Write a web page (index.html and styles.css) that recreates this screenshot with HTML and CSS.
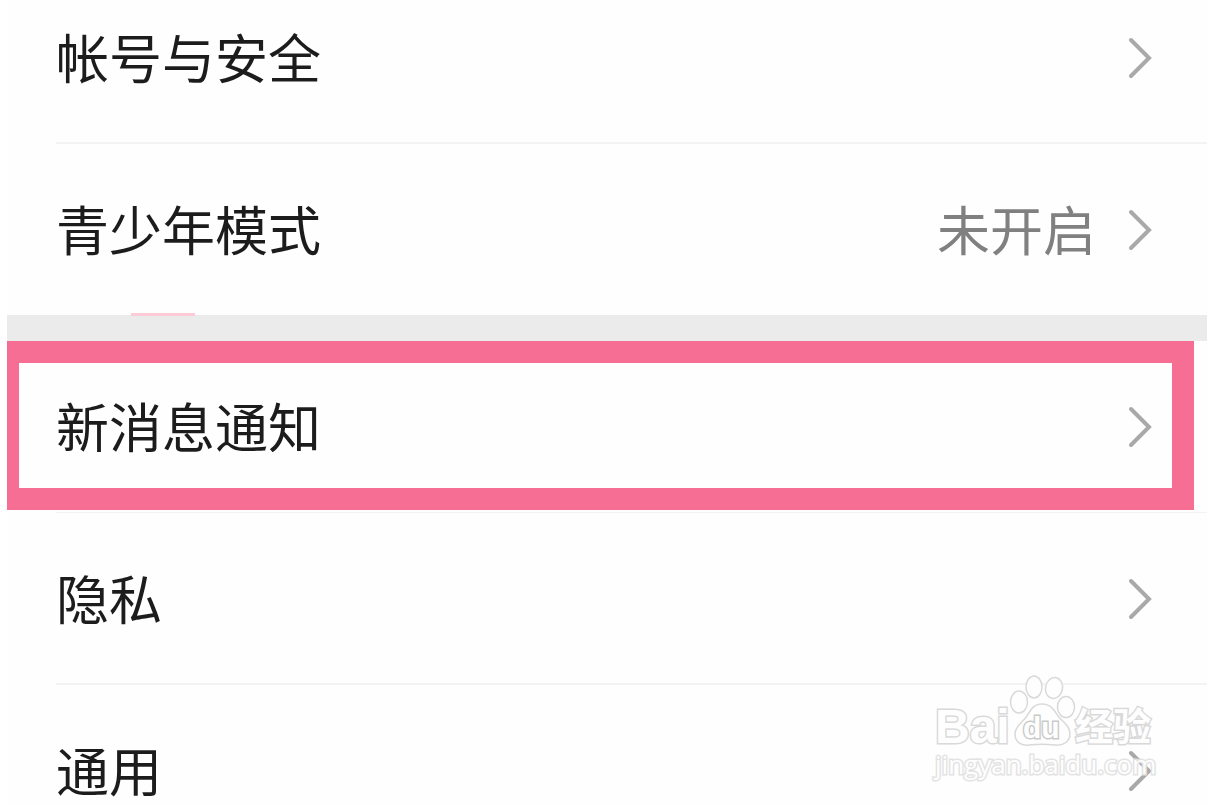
FILE: index.html
```html
<!DOCTYPE html>
<html lang="zh-CN">
<head>
    <meta charset="UTF-8">
    <meta name="viewport" content="width=device-width, initial-scale=1.0">
    <title>设置</title>
    <link rel="stylesheet" href="styles.css">
</head>
<body>
    <div class="app">
        <nav class="group">
            <a href="#" class="row">
                <span class="label">帐号与安全</span>
                <svg class="arrow" viewBox="0 0 26 42"><path d="M3 3 L21 21 L3 39"/></svg>
            </a>
            <a href="#" class="row">
                <span class="label">青少年模式</span>
                <span class="value">未开启</span>
                <svg class="arrow" viewBox="0 0 26 42"><path d="M3 3 L21 21 L3 39"/></svg>
            </a>
        </nav>
        <div class="gap"><i class="mark"></i></div>
        <nav class="group">
            <a href="#" class="row active">
                <span class="label">新消息通知</span>
                <svg class="arrow" viewBox="0 0 26 42"><path d="M3 3 L21 21 L3 39"/></svg>
            </a>
            <a href="#" class="row">
                <span class="label">隐私</span>
                <svg class="arrow" viewBox="0 0 26 42"><path d="M3 3 L21 21 L3 39"/></svg>
            </a>
            <a href="#" class="row">
                <span class="label">通用</span>
                <svg class="arrow" viewBox="0 0 26 42"><path d="M3 3 L21 21 L3 39"/></svg>
            </a>
        </nav>
    </div>

    <svg class="watermark" viewBox="0 0 230 116">
        <text class="bai" x="5" y="73">Bai</text>
        <ellipse cx="104" cy="17" rx="8" ry="11"/>
        <ellipse cx="124" cy="18" rx="8.5" ry="10.5" transform="rotate(12 124 18)"/>
        <ellipse cx="89" cy="32" rx="8.5" ry="11"/>
        <ellipse cx="136" cy="37" rx="8.5" ry="10.5"/>
        <path d="M112 34 C104 34 101 39 97 46 C93 52 85 56 85 64 C85 72 91 76 99 75 C107 74 117 74 125 75 C134 76 140 71 140 64 C140 56 133 52 128 46 C124 39 120 34 112 34 Z"/>
        <text class="du" x="93" y="68">du</text>
        <text class="exp" x="145" y="70">经验</text>
        <text class="url" x="5" y="104">jingyan.baidu.com</text>
    </svg>
</body>
</html>
```

FILE: styles.css
```css
html, body {
    height: 100%;
    margin: 0;
    padding: 0;
    background: #fff;
    font-family: "Noto Sans CJK SC", sans-serif;
}

body {
    position: relative;
    overflow: hidden;
}

/* list is scrolled a little, first row is cut at the top */
.app {
    margin: -28px 13px 0 7px;
    display: flow-root;
    background: #fefefe;
}

.row {
    position: relative;
    display: flex;
    align-items: center;
    height: 172px;
    box-sizing: border-box;
    padding: 0 53px 0 49px;
    color: #1c1c1c;
    font-size: 53px;
    line-height: 80px;
    text-decoration: none;
}

.row::after {
    content: "";
    position: absolute;
    left: 49px;
    right: 0;
    bottom: 0;
    height: 2px;
    background: #f3f3f3;
}

.row:last-child::after {
    display: none;
}

.label, .value {
    padding-bottom: 5px;
}

.label {
    flex: 1;
}

.value {
    color: #808080;
    margin-right: 32px;
}

.arrow {
    width: 26px;
    height: 42px;
    fill: none;
    stroke: #a9a9a9;
    stroke-width: 4;
    stroke-linecap: round;
    stroke-linejoin: miter;
}

.gap {
    position: relative;
    height: 26px;
    margin-top: -1px;
    background: #ebebeb;
}

.mark {
    position: absolute;
    left: 124px;
    top: -2px;
    width: 64px;
    height: 3px;
    background: #fbccd6;
}

/* pink frame round the selected row */
.active::before {
    content: "";
    position: absolute;
    top: 0;
    left: 0;
    right: 13px;
    bottom: 3px;
    border: 22px solid #f76e95;
    border-left-width: 12px;
}

.active::after {
    height: 1px;
}

.watermark {
    position: absolute;
    right: 60px;
    bottom: 20px;
    width: 230px;
    height: 116px;
    fill: #fff;
    stroke: #d8d8d8;
    stroke-width: 1.5;
    opacity: 0.95;
    pointer-events: none;
}

.watermark text {
    stroke-width: 3;
    paint-order: stroke;
}

.bai {
    font: bold 48px "Liberation Sans", sans-serif;
}

.du {
    font: bold 30px "Liberation Sans", sans-serif;
    stroke: #c8c8c8;
}

.exp {
    font: bold 38px "Noto Sans CJK SC", sans-serif;
}

.url {
    font: 26px "Open Sans", sans-serif;
    stroke: #e2e2e2;
}
```
